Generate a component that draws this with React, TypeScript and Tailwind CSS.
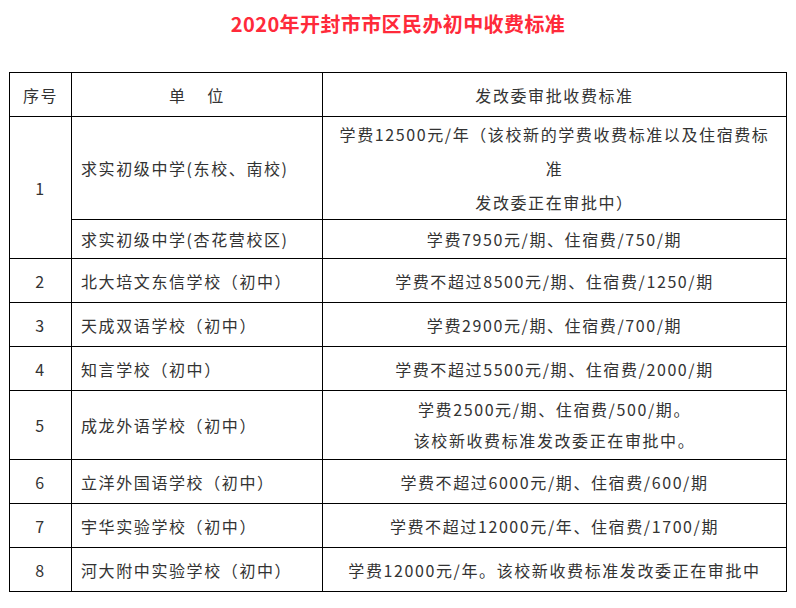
import React from 'react';

const rows = [
  { no: '2', name: '北大培文东信学校（初中）', fee: '学费不超过8500元/期、住宿费/1250/期' },
  { no: '3', name: '天成双语学校（初中）', fee: '学费2900元/期、住宿费/700/期' },
  { no: '4', name: '知言学校（初中）', fee: '学费不超过5500元/期、住宿费/2000/期' },
];

const rowsAfter = [
  { no: '6', name: '立洋外国语学校（初中）', fee: '学费不超过6000元/期、住宿费/600/期' },
  { no: '7', name: '宇华实验学校（初中）', fee: '学费不超过12000元/年、住宿费/1700/期' },
  { no: '8', name: '河大附中实验学校（初中）', fee: '学费12000元/年。该校新收费标准发改委正在审批中' },
];

const cell = 'border border-black align-middle';

const App: React.FC = () => {
  const Row = ({ no, name, fee }: { no: string; name: string; fee: string }) => (
    <tr className="h-[44px]">
      <td className={`${cell} text-center`}>{no}</td>
      <td className={`${cell} pl-[9px]`}>{name}</td>
      <td className={`${cell} text-center`}>{fee}</td>
    </tr>
  );

  return (
    <div
      className="w-[796px] h-[608px] bg-white text-[#333] text-[16px] tracking-[1.6px]"
      style={{ fontFamily: '"Noto Sans CJK SC", "Noto Sans", sans-serif' }}
    >
      {/* Title */}
      <h1 className="pt-[9px] h-[72px] text-center text-[20px] leading-[30px] font-bold tracking-[0.4px] text-[#ff2a3a]">
        2020年开封市市区民办初中收费标准
      </h1>

      <table className="ml-[9px] w-[778px] border-collapse table-fixed">
        <colgroup>
          <col className="w-[62px]" />
          <col className="w-[251px]" />
          <col />
        </colgroup>
        <tbody>
          <tr className="h-[44px]">
            <td className={`${cell} text-center`}>序号</td>
            <td className={`${cell} text-center`}>单&nbsp;&nbsp;&nbsp;&nbsp;位</td>
            <td className={`${cell} text-center`}>发改委审批收费标准</td>
          </tr>
          <tr className="h-[103px]">
            <td rowSpan={2} className={`${cell} text-center`}>1</td>
            <td className={`${cell} pl-[9px]`}>求实初级中学(东校、南校)</td>
            <td className={`${cell} text-center leading-[34px] whitespace-nowrap`}>
              学费12500元/年（该校新的学费收费标准以及住宿费标
              <br />准<br />
              发改委正在审批中）
            </td>
          </tr>
          <tr className="h-[39px]">
            <td className={`${cell} pl-[9px]`}>求实初级中学(杏花营校区)</td>
            <td className={`${cell} text-center`}>学费7950元/期、住宿费/750/期</td>
          </tr>
          {rows.map((r) => (
            <Row key={r.no} {...r} />
          ))}
          <tr className="h-[69px]">
            <td className={`${cell} text-center`}>5</td>
            <td className={`${cell} pl-[9px]`}>成龙外语学校（初中）</td>
            <td className={`${cell} text-center leading-[31px]`}>
              学费2500元/期、住宿费/500/期。
              <br />
              该校新收费标准发改委正在审批中。
            </td>
          </tr>
          {rowsAfter.map((r) => (
            <Row key={r.no} {...r} />
          ))}
        </tbody>
      </table>
    </div>
  );
};

export default App;
